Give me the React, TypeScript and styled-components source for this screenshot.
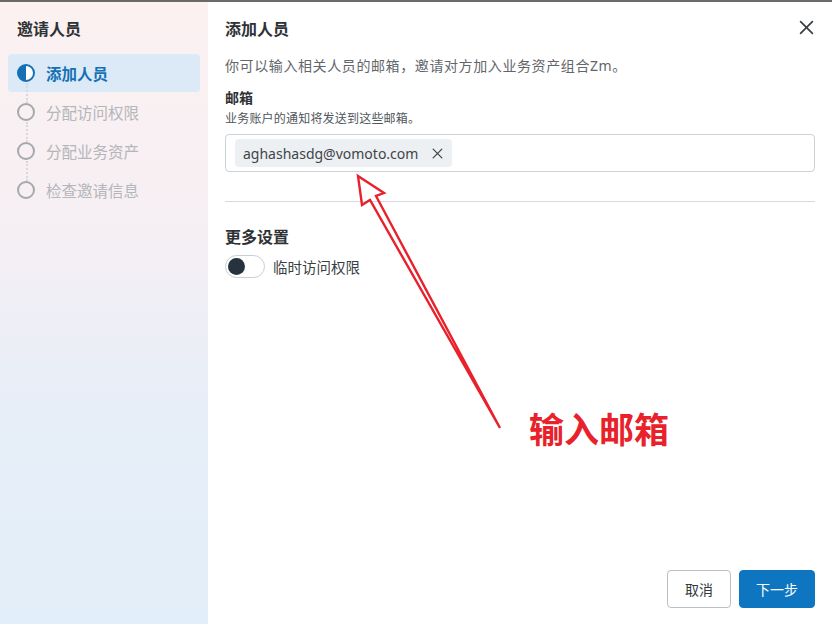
import React from 'react';
import styled, { createGlobalStyle } from 'styled-components';

const GlobalStyle = createGlobalStyle`
  html, body {
    margin: 0;
    padding: 0;
    background: #ffffff;
  }
  body {
    font-family: "Noto Sans", "Noto Sans CJK SC", sans-serif;
    color: #2b2f33;
  }
`;

const Frame = styled.div`
  position: relative;
  display: flex;
  width: 832px;
  height: 624px;
  box-sizing: border-box;
  border-top: 2px solid #6a6a6a;
  overflow: hidden;
  background: #ffffff;
`;

const Sidebar = styled.aside`
  width: 208px;
  flex-shrink: 0;
  display: flex;
  flex-direction: column;
  padding: 0 8px;
  box-sizing: border-box;
  background: linear-gradient(180deg, #fbf1f1 0%, #f6eff3 35%, #e7eef8 65%, #e2eef9 100%);
`;

const SideTitle = styled.div`
  height: 51px;
  display: flex;
  align-items: center;
  padding-left: 9px;
  font-size: 16px;
  font-weight: 700;
  color: #2f3235;
`;

const Steps = styled.ul`
  list-style: none;
  margin: 1px 0 0;
  padding: 0;
  display: flex;
  flex-direction: column;
  gap: 1px;
`;

const Step = styled.li<{ $active?: boolean; $last?: boolean }>`
  position: relative;
  height: 38px;
  display: flex;
  align-items: center;
  gap: 11px;
  padding-left: 9px;
  border-radius: 4px;
  background: ${p => (p.$active ? '#dce9f6' : 'transparent')};
  color: ${p => (p.$active ? '#1570b6' : '#b4b6b9')};
  font-size: 15.5px;
  font-weight: ${p => (p.$active ? 600 : 400)};

  &::after {
    content: '';
    display: ${p => (p.$last ? 'none' : 'block')};
    position: absolute;
    left: 18px;
    top: 29px;
    height: 20px;
    border-left: 2px dotted #d9d9dd;
  }
`;

const Main = styled.main`
  flex: 1;
  display: flex;
  flex-direction: column;
  padding: 0 17px 16px;
  box-sizing: border-box;
`;

const Header = styled.div`
  height: 51px;
  display: flex;
  align-items: center;
  justify-content: space-between;
`;

const Title = styled.h2`
  margin: 0;
  font-size: 16px;
  font-weight: 700;
  color: #2f3235;
`;

const CloseButton = styled.button`
  border: none;
  background: none;
  padding: 0;
  width: 22px;
  height: 22px;
  margin-right: -2px;
  display: flex;
  align-items: center;
  justify-content: center;
  color: #3a3f44;
`;

const Desc = styled.p`
  margin: 3px 0 0;
  font-size: 14px;
  line-height: 20px;
  letter-spacing: 0.6px;
  color: #62666b;
`;

const Label = styled.div`
  margin-top: 12px;
  font-size: 14px;
  line-height: 20px;
  font-weight: 600;
  color: #2f3235;
`;

const Helper = styled.div`
  margin-top: 3px;
  font-size: 12px;
  line-height: 16px;
  letter-spacing: 0.2px;
  color: #50555a;
`;

const InputBox = styled.div`
  margin-top: 7px;
  height: 38px;
  box-sizing: border-box;
  border: 1px solid #cdd2d7;
  border-radius: 4px;
  display: flex;
  align-items: center;
  padding: 0 9px;
`;

const Chip = styled.span`
  height: 28px;
  display: inline-flex;
  align-items: center;
  gap: 14px;
  padding: 0 9px 0 8px;
  border-radius: 4px;
  background: #edf0f3;
  font-size: 14px;
  color: #3f4448;
`;

const Divider = styled.hr`
  margin: 29px 0 0;
  border: none;
  border-top: 1px solid #d6dadf;
`;

const Section = styled.div`
  margin-top: 25px;
  font-size: 16px;
  line-height: 20px;
  font-weight: 600;
  color: #2f3235;
`;

const ToggleRow = styled.label`
  margin-top: 8px;
  display: flex;
  align-items: center;
  gap: 8px;
  font-size: 14.5px;
  color: #3a3f44;
`;

const Toggle = styled.span`
  width: 40px;
  height: 23px;
  box-sizing: border-box;
  border: 1px solid #c9ced3;
  border-radius: 12px;
  display: flex;
  align-items: center;
  padding-left: 2px;

  &::before {
    content: '';
    width: 17px;
    height: 17px;
    border-radius: 50%;
    background: #26323d;
  }
`;

const Footer = styled.div`
  margin-top: auto;
  display: flex;
  justify-content: flex-end;
  gap: 8px;
`;

const Button = styled.button<{ $primary?: boolean }>`
  height: 38px;
  padding: 0 ${p => (p.$primary ? 16 : 17)}px;
  border-radius: 4px;
  font-family: inherit;
  font-size: 14px;
  border: 1px solid ${p => (p.$primary ? '#0e76c0' : '#b9bfc5')};
  background: ${p => (p.$primary ? '#0e76c0' : '#ffffff')};
  color: ${p => (p.$primary ? '#ffffff' : '#33383c')};
`;

const Annotation = styled.svg`
  position: absolute;
  left: 0;
  top: 0;
  pointer-events: none;
`;

const Callout = styled.div`
  position: absolute;
  left: 529px;
  top: 406px;
  font-size: 35px;
  line-height: 44px;
  font-weight: 700;
  color: #e8212b;
`;

const StepIcon = ({ active }: { active?: boolean }) =>
  active ? (
    <svg width="18" height="18" viewBox="0 0 18 18">
      <circle cx="9" cy="9" r="8" fill="#fff" stroke="#1570b6" strokeWidth="2" />
      <path d="M9 1 A8 8 0 0 0 9 17 Z" fill="#1570b6" />
    </svg>
  ) : (
    <svg width="18" height="18" viewBox="0 0 18 18">
      <circle cx="9" cy="9" r="8" fill="none" stroke="#a5a9ad" strokeWidth="2" />
    </svg>
  );

const XIcon = ({ size, stroke }: { size: number; stroke: number }) => (
  <svg width={size} height={size} viewBox="0 0 14 14">
    <path d="M1.5 1.5 L12.5 12.5 M12.5 1.5 L1.5 12.5" stroke="currentColor" strokeWidth={stroke} strokeLinecap="round" />
  </svg>
);

const steps = ['添加人员', '分配访问权限', '分配业务资产', '检查邀请信息'];

export default function App() {
  return (
    <>
      <GlobalStyle />
      <Frame>
        <Sidebar>
          <SideTitle>邀请人员</SideTitle>
          <Steps>
            {steps.map((s, i) => (
              <Step key={s} $active={i === 0} $last={i === steps.length - 1}>
                <StepIcon active={i === 0} />
                {s}
              </Step>
            ))}
          </Steps>
        </Sidebar>
        <Main>
          <Header>
            <Title>添加人员</Title>
            <CloseButton>
              <XIcon size={15} stroke={1.6} />
            </CloseButton>
          </Header>
          <Desc>你可以输入相关人员的邮箱，邀请对方加入业务资产组合Zm。</Desc>
          <Label>邮箱</Label>
          <Helper>业务账户的通知将发送到这些邮箱。</Helper>
          <InputBox>
            <Chip>
              aghashasdg@vomoto.com
              <XIcon size={11} stroke={1.6} />
            </Chip>
          </InputBox>
          <Divider />
          <Section>更多设置</Section>
          <ToggleRow>
            <Toggle />
            临时访问权限
          </ToggleRow>
          <Footer>
            <Button>取消</Button>
            <Button $primary>下一步</Button>
          </Footer>
        </Main>
        <Annotation width="832" height="622" viewBox="0 2 832 622">
          <polygon
            points="358,176 384,193 376,196 500,428 370,200 362,205"
            fill="none"
            stroke="#e8212b"
            strokeWidth="2.4"
            strokeLinejoin="miter"
          />
        </Annotation>
        <Callout>输入邮箱</Callout>
      </Frame>
    </>
  );
}
